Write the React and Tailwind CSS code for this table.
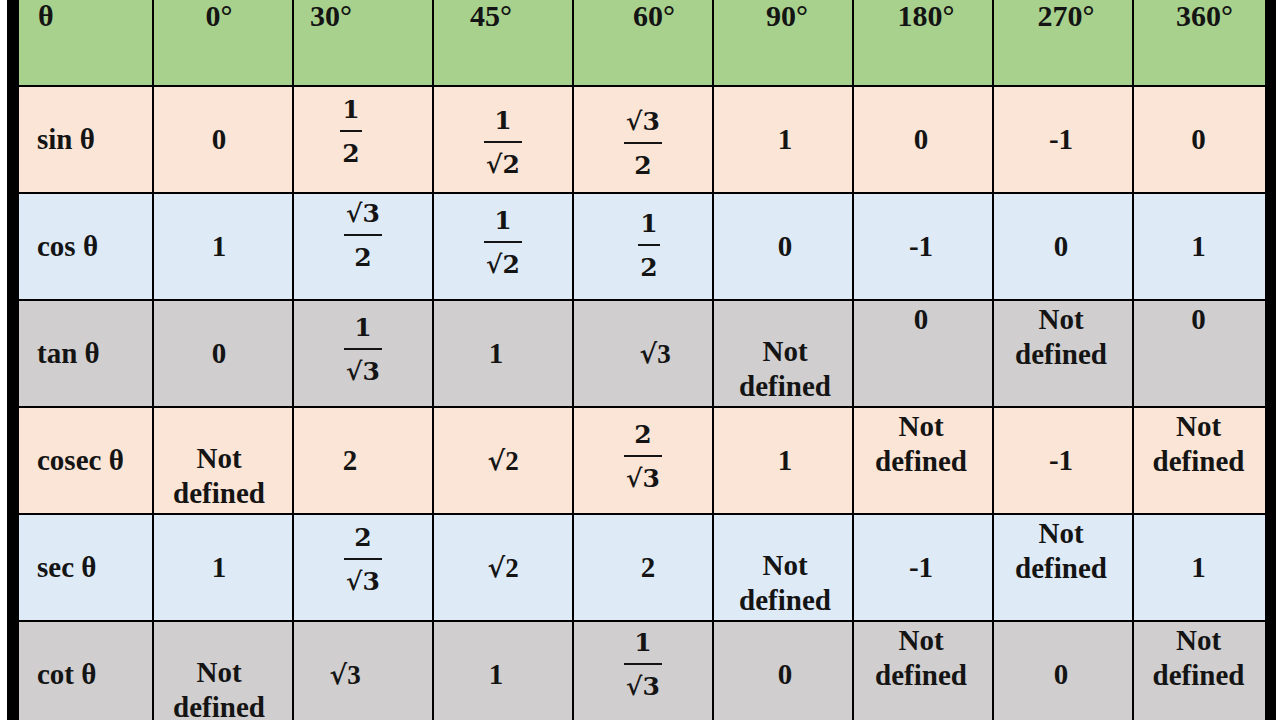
const serif = "font-['Liberation_Serif','Times_New_Roman',serif]"
const math = "font-['DejaVu_Serif',serif]"

const header = [
  { v: 'θ', cls: 'justify-start pl-[19px]' },
  { v: '0°', cls: 'justify-center pr-[8px]' },
  { v: '30°', cls: 'justify-start pl-[16px]' },
  { v: '45°', cls: 'justify-center pr-[24px]' },
  { v: '60°', cls: 'justify-center pl-[22px]' },
  { v: '90°', cls: 'justify-center pl-[8px]' },
  { v: '180°', cls: 'justify-center pl-[6px]' },
  { v: '270°', cls: 'justify-center pl-[6px]' },
  { v: '360°', cls: 'justify-center pl-[10px]' },
]

// horizontal nudge per value column, so text sits where the reference puts it
const colPad = ['pr-[8px]', '', '', '', 'pl-[4px]', 'pr-[4px]', 'pr-[4px]', 'pr-[2px]']

const rows = [
  {
    label: 'sin θ',
    bg: 'bg-[#fbe5d6]',
    cells: [
      { v: '0' },
      { n: '1', d: '2', pad: 'pr-[24px] pb-[16px]' },
      { n: '1', d: '√2', pad: 'pt-[6px]' },
      { n: '√3', d: '2', pad: 'pt-[8px]' },
      { v: '1' },
      { v: '0' },
      { v: '-1' },
      { v: '0' },
    ],
  },
  {
    label: 'cos θ',
    bg: 'bg-[#deebf7]',
    cells: [
      { v: '1' },
      { n: '√3', d: '2', pad: 'pb-[22px]' },
      { n: '1', d: '√2', pad: 'pb-[8px]' },
      { n: '1', d: '2', pad: 'pl-[12px] pb-[2px]' },
      { v: '0' },
      { v: '-1' },
      { v: '0' },
      { v: '1' },
    ],
  },
  {
    label: 'tan θ',
    bg: 'bg-[#d0cece]',
    cells: [
      { v: '0' },
      { n: '1', d: '√3', pad: 'pb-[8px]' },
      { v: '1', pad: 'pr-[14px]' },
      { r: '3', pad: 'pl-[24px]' },
      { nd: true, pos: 'b' },
      { v: '0', pos: 't' },
      { nd: true, pos: 't' },
      { v: '0', pos: 't' },
    ],
  },
  {
    label: 'cosec θ',
    bg: 'bg-[#fbe5d6]',
    cells: [
      { nd: true, pos: 'b' },
      { v: '2', pad: 'pr-[26px]' },
      { r: '2' },
      { n: '2', d: '√3', pad: 'pb-[8px]' },
      { v: '1' },
      { nd: true, pos: 't' },
      { v: '-1' },
      { nd: true, pos: 't' },
    ],
  },
  {
    label: 'sec θ',
    bg: 'bg-[#deebf7]',
    cells: [
      { v: '1' },
      { n: '2', d: '√3', pad: 'pb-[16px]' },
      { r: '2' },
      { v: '2', pad: 'pl-[10px]' },
      { nd: true, pos: 'b' },
      { v: '-1' },
      { nd: true, pos: 't' },
      { v: '1' },
    ],
  },
  {
    label: 'cot θ',
    bg: 'bg-[#d0cece]',
    cells: [
      { nd: true, pos: 'b' },
      { r: '3', pad: 'pr-[36px]' },
      { v: '1', pad: 'pr-[14px]' },
      { n: '1', d: '√3', pad: 'pb-[20px]' },
      { v: '0' },
      { nd: true, pos: 't' },
      { v: '0' },
      { nd: true, pos: 't' },
    ],
  },
]

function Frac({ n, d }) {
  return (
    <div className={`inline-flex flex-col items-stretch ${math} text-[25px] leading-[25px] font-bold`}>
      <span className="px-[2px] text-center">{n}</span>
      <div className="mt-[8px] mb-[9px] h-[2px] bg-[#141414]" />
      <span className="px-[2px] text-center">{d}</span>
    </div>
  )
}

function Cell({ c, bg, col }) {
  const align =
    c.pos === 't' ? 'items-start pt-px' : c.pos === 'b' ? 'items-end pb-[2px]' : 'items-center'

  let content
  if (c.nd) {
    content = (
      <span className="text-center text-[29px] leading-[35px]">
        Not
        <br />
        defined
      </span>
    )
  } else if (c.n) {
    content = <Frac n={c.n} d={c.d} />
  } else if (c.r) {
    content = (
      <span className="flex items-baseline leading-[35px]">
        <span className={`${math} text-[27px]`}>√</span>
        <span className="text-[27px]">{c.r}</span>
      </span>
    )
  } else {
    content = <span className="text-[29px] leading-[35px]">{c.v}</span>
  }

  return (
    <div className={`flex justify-center ${align} ${bg} ${c.pad ?? colPad[col]}`}>{content}</div>
  )
}

export default function App() {
  return (
    <div className={`flex h-[720px] w-[1280px] overflow-hidden bg-white font-bold text-[#141414] ${serif}`}>
      <div className="w-[7px] shrink-0 bg-white" />
      <div className="w-[12px] shrink-0 bg-black" />

      <div className="grid shrink-0 self-start grid-cols-[133px_repeat(7,138px)_131px] grid-rows-[85px_repeat(6,105px)] gap-[2px] bg-black">
        {header.map((h, i) => (
          <div key={i} className={`flex items-start bg-[#a9d18e] text-[30px] leading-[32px] ${h.cls}`}>
            {h.v}
          </div>
        ))}

        {rows.map((row) => [
          <div key={row.label} className={`flex items-center pl-[18px] text-[29px] leading-[35px] ${row.bg}`}>
            {row.label}
          </div>,
          ...row.cells.map((c, j) => <Cell key={row.label + j} c={c} bg={row.bg} col={j} />),
        ])}
      </div>

      <div className="w-[11px] shrink-0 bg-black" />
      <div className="w-[4px] shrink-0 bg-white" />
    </div>
  )
}
